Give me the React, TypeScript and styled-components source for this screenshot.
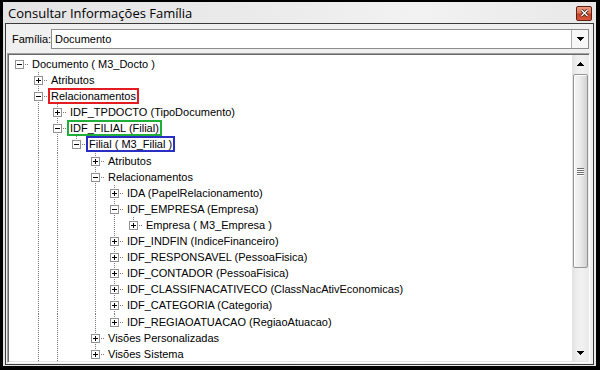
import React from 'react';
import styled, { createGlobalStyle } from 'styled-components';

const GlobalStyle = createGlobalStyle`
    html, body {
        margin: 0;
        padding: 0;
        background: #000;
    }
    body {
        width: 600px;
        height: 370px;
        overflow: hidden;
        font-family: 'Liberation Sans', Arial, sans-serif;
    }
`;

const DOT = '#7a7a7a';

const Window = styled.div`
    width: 600px;
    height: 370px;
    box-sizing: border-box;
    padding: 2px 4px 4px 3px;
    background: #000;
    display: flex;
`;

const Frame = styled.div`
    flex: 1;
    display: flex;
    flex-direction: column;
    padding: 0 2px 1px 2px;
    background: linear-gradient(90deg, #e4e4e4 0%, #ebebeb 45%, #f2f2f2 70%, #e8e8e8 100%);
    min-width: 0;
`;

const TitleBar = styled.div`
    height: 21px;
    flex: none;
    display: flex;
    align-items: center;
    justify-content: space-between;
    padding: 0 2px 0 3px;
    font-family: 'Open Sans', 'Liberation Sans', sans-serif;
    font-size: 13px;
    color: #000;
`;

const CloseButton = styled.div`
    width: 16px;
    height: 15px;
    box-sizing: border-box;
    border: 1px solid #5e2114;
    border-radius: 2px;
    background-color: #d35a3e;
    background-image: linear-gradient(180deg, #eb9a82 0%, #e07659 45%, #c53d22 55%, #d8583b 100%);
    display: flex;
    align-items: center;
    justify-content: center;
    margin-top: 1px;
`;

const Client = styled.div`
    flex: 1;
    min-height: 0;
    display: flex;
    flex-direction: column;
    gap: 4px;
    border: 1px solid #3a3a3a;
    background: #f0f0f0;
    padding: 5px 3px 1px 1px;
`;

const FamilyRow = styled.div`
    height: 20px;
    flex: none;
    display: flex;
    align-items: center;
    padding: 0 1px 0 5px;
    font-size: 11px;
`;

const FieldLabel = styled.span`
    width: 39px;
    flex: none;
`;

const Combo = styled.div`
    flex: 1;
    height: 20px;
    box-sizing: border-box;
    display: flex;
    border: 1px solid #8c8c8c;
    background: #fff;
`;

const ComboText = styled.div`
    flex: 1;
    padding-left: 3px;
    line-height: 18px;
    font-size: 11px;
`;

const DropButton = styled.div`
    width: 16px;
    flex: none;
    border-left: 1px solid #acacac;
    background: #f7f7f7;
    display: flex;
    align-items: center;
    justify-content: center;
`;

const TreePanel = styled.div`
    flex: 1;
    min-height: 0;
    display: flex;
    border: 1px solid;
    border-color: #a0a0a0 #ffffff #ffffff #a0a0a0;
    padding: 1px 0 1px 1px;
    box-shadow: inset 1px 1px 0 #696969, inset -1px -1px 0 #e3e3e3;
    background: #fff;
`;

const TreeBody = styled.div`
    flex: 1;
    min-width: 0;
    overflow: hidden;
    padding: 1px 0 0 1px;
    background: #fff;
    font-size: 11px;
    color: #000;
`;

const Row = styled.div`
    height: 16.1px;
    display: flex;
    white-space: nowrap;
`;

const vLine = (h: string) =>
    `repeating-linear-gradient(to bottom, ${DOT} 0 1px, transparent 1px 2px) 9px 0 / 1px ${h} no-repeat`;

const Guide = styled.div<{ $line: boolean }>`
    width: 19px;
    flex: none;
    background: ${(p) => (p.$line ? vLine('100%') : 'none')};
`;

const NodeCell = styled.div<{ $up: boolean; $down: boolean }>`
    width: 19px;
    flex: none;
    box-sizing: border-box;
    padding: 4px 0 0 5px;
    background: ${(p) =>
        [
            `repeating-linear-gradient(to right, ${DOT} 0 1px, transparent 1px 2px) 9px 8px / 10px 1px no-repeat`,
            p.$up ? vLine(p.$down ? '100%' : '8px') : null,
        ]
            .filter(Boolean)
            .join(', ')};
`;

const MARKS = {
    red: '#e31b23',
    green: '#1fae3a',
    blue: '#2a2fc4',
};

const Label = styled.span<{ $mark?: keyof typeof MARKS }>`
    height: 16px;
    box-sizing: border-box;
    border: 2px solid ${(p) => (p.$mark ? MARKS[p.$mark] : 'transparent')};
    padding: 0 1px;
    line-height: 12px;
`;

const ScrollBar = styled.div`
    width: 17px;
    flex: none;
    display: flex;
    flex-direction: column;
    background: linear-gradient(90deg, #e2e2e2 0%, #eeeeee 30%, #f1f1f1 60%, #e9e9e9 100%);
`;

const ScrollButton = styled.div`
    height: 17px;
    flex: none;
    display: flex;
    align-items: center;
    justify-content: center;
`;

const Track = styled.div`
    flex: 1;
    padding: 2px 1px 0 1px;
`;

const Thumb = styled.div`
    box-sizing: border-box;
    border: 1px solid #959595;
    border-radius: 2px;
    background: linear-gradient(90deg, #f4f4f4 0%, #ececec 45%, #dedede 75%, #cfcfcf 100%);
    box-shadow: inset 1px 1px 0 #fff;
    display: flex;
    flex-direction: column;
    align-items: center;
    justify-content: center;
    gap: 1px;
`;

const Grip = styled.div`
    width: 7px;
    height: 1px;
    background: #6e6e6e;
    box-shadow: 0 1px 0 #fff;
`;

type TreeNode = {
    label: string;
    open?: boolean;
    mark?: keyof typeof MARKS;
    // the list of children goes on below the visible area
    more?: boolean;
    children?: TreeNode[];
};

const tree: TreeNode[] = [
    {
        label: 'Documento ( M3_Docto )',
        open: true,
        more: true,
        children: [
            { label: 'Atributos' },
            {
                label: 'Relacionamentos',
                open: true,
                mark: 'red',
                more: true,
                children: [
                    { label: 'IDF_TPDOCTO (TipoDocumento)' },
                    {
                        label: 'IDF_FILIAL (Filial)',
                        open: true,
                        mark: 'green',
                        children: [
                            {
                                label: 'Filial ( M3_Filial )',
                                open: true,
                                mark: 'blue',
                                children: [
                                    { label: 'Atributos' },
                                    {
                                        label: 'Relacionamentos',
                                        open: true,
                                        children: [
                                            { label: 'IDA (PapelRelacionamento)' },
                                            {
                                                label: 'IDF_EMPRESA (Empresa)',
                                                open: true,
                                                children: [{ label: 'Empresa ( M3_Empresa )' }],
                                            },
                                            { label: 'IDF_INDFIN (IndiceFinanceiro)' },
                                            { label: 'IDF_RESPONSAVEL (PessoaFisica)' },
                                            { label: 'IDF_CONTADOR (PessoaFisica)' },
                                            { label: 'IDF_CLASSIFNACATIVECO (ClassNacAtivEconomicas)' },
                                            { label: 'IDF_CATEGORIA (Categoria)' },
                                            { label: 'IDF_REGIAOATUACAO (RegiaoAtuacao)' },
                                        ],
                                    },
                                    { label: 'Visões Personalizadas' },
                                    { label: 'Visões Sistema' },
                                ],
                            },
                        ],
                    },
                ],
            },
        ],
    },
];

type FlatRow = { node: TreeNode; depth: number; guides: boolean[]; last: boolean };

const flatten = (nodes: TreeNode[], depth: number, guides: boolean[], more: boolean, out: FlatRow[]) => {
    nodes.forEach((node, i) => {
        const last = i === nodes.length - 1 && !more;
        out.push({ node, depth, guides, last });
        if (node.open && node.children) flatten(node.children, depth + 1, [...guides, !last], !!node.more, out);
    });
    return out;
};

const ExpandBox = ({ open }: { open?: boolean }) => (
    <svg width="9" height="9" viewBox="0 0 9 9" shapeRendering="crispEdges" style={{ display: 'block' }}>
        <rect x="0.5" y="0.5" width="8" height="8" fill="#fff" stroke="#919191" />
        <line x1="2" y1="4.5" x2="7" y2="4.5" stroke="#000" />
        {!open && <line x1="4.5" y1="2" x2="4.5" y2="7" stroke="#000" />}
    </svg>
);

const CloseGlyph = () => (
    <svg width="9" height="8" viewBox="0 0 9 8" style={{ display: 'block' }}>
        <path d="M1.5 1 L7.5 7 M7.5 1 L1.5 7" stroke="#3a1f1a" strokeWidth="3" />
        <path d="M1.5 1 L7.5 7 M7.5 1 L1.5 7" stroke="#fff" strokeWidth="1.4" />
    </svg>
);

const Arrow = ({ dir }: { dir: 'up' | 'down' }) => (
    <svg width="7" height="4" viewBox="0 0 7 4" shapeRendering="crispEdges">
        <polygon points={dir === 'down' ? '0,0 7,0 3.5,4' : '0,4 7,4 3.5,0'} fill="#000" />
    </svg>
);

const App = () => {
    const rows = flatten(tree, 0, [], false, []);
    return (
        <>
            <GlobalStyle />
            <Window>
                <Frame>
                    <TitleBar>
                        <span>Consultar Informações Família</span>
                        <CloseButton>
                            <CloseGlyph />
                        </CloseButton>
                    </TitleBar>
                    <Client>
                        <FamilyRow>
                            <FieldLabel>Família:</FieldLabel>
                            <Combo>
                                <ComboText>Documento</ComboText>
                                <DropButton>
                                    <Arrow dir="down" />
                                </DropButton>
                            </Combo>
                        </FamilyRow>
                        <TreePanel>
                            <TreeBody>
                                {rows.map((r, i) => (
                                    <Row key={i}>
                                        {r.guides.map((g, j) => (
                                            <Guide key={j} $line={g} />
                                        ))}
                                        <NodeCell $up={r.depth > 0} $down={!r.last}>
                                            <ExpandBox open={r.node.open} />
                                        </NodeCell>
                                        <Label $mark={r.node.mark}>{r.node.label}</Label>
                                    </Row>
                                ))}
                            </TreeBody>
                            <ScrollBar>
                                <ScrollButton>
                                    <Arrow dir="up" />
                                </ScrollButton>
                                <Track>
                                    <Thumb style={{ height: 194 }}>
                                        <Grip />
                                        <Grip />
                                        <Grip />
                                        <Grip />
                                    </Thumb>
                                </Track>
                                <ScrollButton>
                                    <Arrow dir="down" />
                                </ScrollButton>
                            </ScrollBar>
                        </TreePanel>
                    </Client>
                </Frame>
            </Window>
        </>
    );
};

export default App;
